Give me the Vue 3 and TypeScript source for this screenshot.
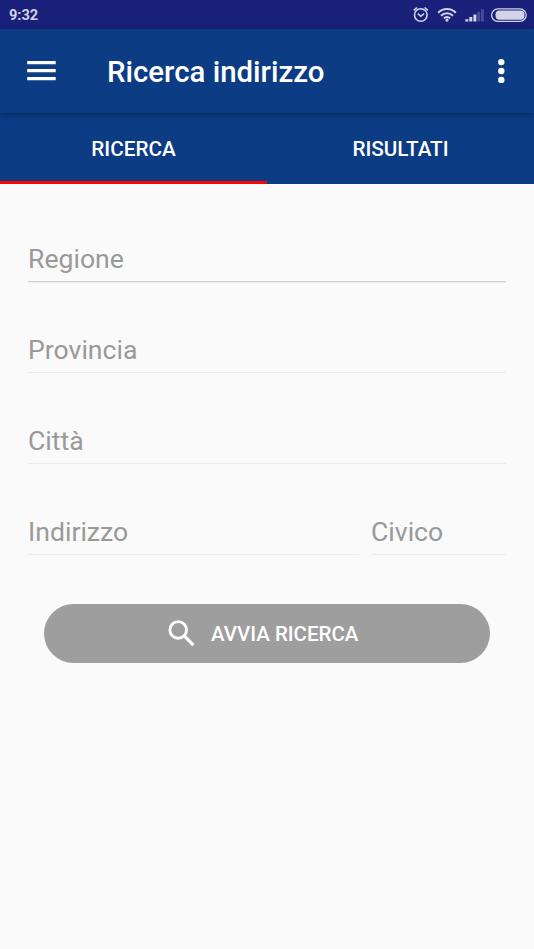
<script setup lang="ts">
import { ref } from 'vue'

interface Field {
  id: string
  label: string
  active?: boolean
}

const tabs: string[] = ['RICERCA', 'RISULTATI']
const activeTab = ref(0)

const rows: Field[][] = [
  [{ id: 'regione', label: 'Regione', active: true }],
  [{ id: 'provincia', label: 'Provincia' }],
  [{ id: 'citta', label: 'Città' }],
  [
    { id: 'indirizzo', label: 'Indirizzo' },
    { id: 'civico', label: 'Civico' },
  ],
]
</script>

<template>
  <div class="screen">
    <div class="status">
      <span class="clock">9:32</span>
      <svg class="status-icons" width="116" height="29" viewBox="412 0 116 29" fill="none" stroke="#d2d3e8">
        <circle cx="420.8" cy="15" r="6.3" stroke-width="1.6" />
        <path d="M417.7 13.6l3.1 2.7 3.3-2.7" stroke-width="1.5" />
        <path d="M413.7 10.4l3.3-2.9M427.9 10.4l-3.3-2.9" stroke-width="1.6" />
        <path d="M438.2 12.7a12.4 12.4 0 0 1 17.6 0M441 15.7a8.4 8.4 0 0 1 12 0M443.9 18.4a4.4 4.4 0 0 1 6.2 0" stroke-width="2" />
        <circle cx="447" cy="20.1" r="1.6" fill="#d2d3e8" stroke="none" />
        <g fill="#d2d3e8" stroke="none">
          <path d="M465.3 19.2h3v2.4h-3zM469.3 17h3v4.6h-3zM473.4 14.4h3v7.2h-3z" />
          <path d="M477.3 11.8h2.8v9.8h-2.8zM481 9.2h2.8v12.4H481z" opacity=".25" />
        </g>
        <rect x="491.6" y="8.9" width="34.6" height="12.5" rx="6.2" stroke-width="1.3" />
        <rect x="495.5" y="10.5" width="29" height="9.3" rx="4" fill="#d2d3e8" stroke="none" />
      </svg>
    </div>

    <header class="appbar">
      <button class="icon-btn menu" aria-label="Menu">
        <svg width="29" height="20" viewBox="0 0 29 20" fill="#fff">
          <path d="M.2 0h28.5v3.2H.2zM.2 8.1h28.5v3.2H.2zM.2 16.1h28.5v3.2H.2z" />
        </svg>
      </button>
      <h1 class="title">Ricerca indirizzo</h1>
      <button class="icon-btn more" aria-label="Altro">
        <svg width="8" height="26" viewBox="0 0 8 26" fill="#fff">
          <circle cx="4.3" cy="4.1" r="3.2" />
          <circle cx="4.3" cy="13" r="3.2" />
          <circle cx="4.3" cy="21.9" r="3.2" />
        </svg>
      </button>
    </header>

    <nav class="tabs">
      <button
        v-for="(tab, i) in tabs"
        :key="tab"
        class="tab"
        :class="{ selected: activeTab === i }"
        @click="activeTab = i"
      >
        {{ tab }}
      </button>
    </nav>

    <main class="form">
      <div v-for="(row, i) in rows" :key="i" class="row">
        <div
          v-for="field in row"
          :key="field.id"
          class="field"
          :class="[field.id, { active: field.active }]"
        >
          {{ field.label }}
        </div>
      </div>
      <button class="submit">
        <svg width="27" height="27" viewBox="0 0 27 27" fill="none" stroke="#fff">
          <circle cx="10.2" cy="9.9" r="8.3" stroke-width="2.9" />
          <path d="M16 15.7l9.4 9.4" stroke-width="3.2" />
        </svg>
        <span>AVVIA RICERCA</span>
      </button>
    </main>
  </div>
</template>

<style>
body {
  margin: 0;
  background: #fafafa;
}
</style>

<style scoped>
.screen {
  width: 534px;
  height: 949px;
  overflow: hidden;
  background: #fafafa;
  font-family: Roboto, 'Liberation Sans', sans-serif;
}
button {
  border: 0;
  margin: 0;
  padding: 0;
  background: none;
  font: inherit;
  color: inherit;
}
svg {
  display: block;
}
.status {
  display: flex;
  justify-content: space-between;
  height: 29px;
  padding: 0 6px 0 9px;
  background: #1a217b;
}
.clock {
  font-size: 14.6px;
  font-weight: 700;
  line-height: 31px;
  color: #d2d3e8;
}
.appbar {
  position: relative;
  display: flex;
  align-items: center;
  height: 84px;
  box-sizing: border-box;
  padding: 0 29px 0 27px;
  background: #0b3c84;
  color: #fff;
  box-shadow: 0 1px 6px rgba(0, 0, 0, 0.4);
}
.menu {
  width: 80px;
}
.title {
  flex: 1;
  margin: 0;
  padding-top: 2px;
  font-size: 29.4px;
  line-height: 36px;
  font-weight: 500;
}
.tabs {
  display: flex;
  height: 71px;
  background: #0b3c84;
  color: #fff;
}
.tab {
  flex: 1;
  box-sizing: border-box;
  border-bottom: 3px solid transparent;
  padding-top: 4px;
  font-size: 20.7px;
  font-weight: 500;
}
.tab.selected {
  border-bottom-color: #fd0105;
}
.form {
  display: flex;
  flex-direction: column;
  padding: 7px 28px 0;
}
.row {
  display: flex;
  gap: 12px;
  height: 91px;
}
.field {
  flex: 1;
  display: flex;
  align-items: flex-end;
  box-sizing: border-box;
  border-bottom: 1px solid #ececec;
  padding-bottom: 7px;
  font-size: 26.6px;
  line-height: 31px;
  color: #999;
}
.field.active {
  border-bottom-color: #d0d0d0;
  box-shadow: 0 1px 0 #efefef;
}
.field.civico {
  flex: 0 0 135px;
}
.submit {
  display: flex;
  align-items: center;
  justify-content: center;
  gap: 16.5px;
  height: 59px;
  margin: 49px 16px 0;
  border-radius: 30px;
  padding-right: 8px;
  background: #9e9e9e;
  color: #fff;
  font-size: 20.5px;
  font-weight: 500;
}
</style>
